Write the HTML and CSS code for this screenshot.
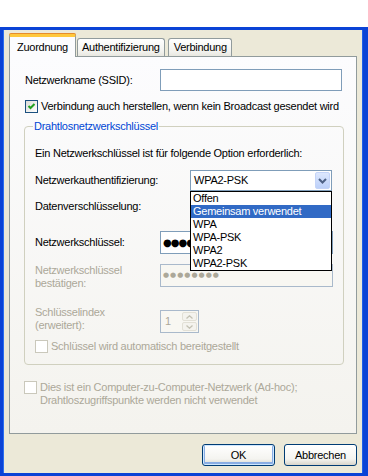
FILE: index.html
```html
<!DOCTYPE html>
<html lang="de">
<head>
  <meta charset="UTF-8" />
  <title>Drahtlosnetzwerkeigenschaften</title>
  <link rel="stylesheet" href="styles.css">
</head>
<body>

  <div class="window">
    <div class="tabs">
      <div class="tab active">Zuordnung</div>
      <div class="tab">Authentifizierung</div>
      <div class="tab">Verbindung</div>
    </div>

    <div class="pane">
      <div class="row ssid-row">
        <span class="lbl">Netzwerkname (SSID):</span>
        <div class="field ssid"></div>
      </div>

      <div class="check-row broadcast">
        <span class="cb checked">
          <svg width="11" height="11" viewBox="0 0 11 11"><polyline points="2.5,5 4.5,7 8.5,3" fill="none" stroke="#21a121" stroke-width="2"/></svg>
        </span>
        <span>Verbindung auch herstellen, wenn kein Broadcast gesendet wird</span>
      </div>

      <fieldset class="group">
        <legend>Drahtlosnetzwerkschlüssel</legend>

        <p class="intro">Ein Netzwerkschlüssel ist für folgende Option erforderlich:</p>

        <div class="row auth-row">
          <span class="lbl lbl-auth">Netzwerkauthentifizierung:</span>
          <div class="combo">
            <span class="combo-text">WPA2-PSK</span>
            <span class="combo-btn">
              <svg width="9" height="6" viewBox="0 0 9 6"><polyline points="1,1 4.5,4.5 8,1" fill="none" stroke="#4d6185" stroke-width="2"/></svg>
            </span>
            <ul class="dropdown">
              <li>Offen</li>
              <li class="selected">Gemeinsam verwendet</li>
              <li>WPA</li>
              <li>WPA-PSK</li>
              <li>WPA2</li>
              <li>WPA2-PSK</li>
            </ul>
          </div>
        </div>

        <div class="row data-row">
          <span class="lbl">Datenverschlüsselung:</span>
        </div>

        <div class="row key-row">
          <span class="lbl">Netzwerkschlüssel:</span>
          <div class="field key"><span class="dots">●●●●●●●●</span></div>
        </div>

        <div class="row confirm-row">
          <span class="lbl disabled">Netzwerkschlüssel<br>bestätigen:</span>
          <div class="field key off"><span class="dots small">●●●●●●●●</span></div>
        </div>

        <div class="row index-row">
          <span class="lbl disabled">Schlüsselindex<br>(erweitert):</span>
          <div class="spin">
            <span class="spin-val">1</span>
            <span class="spin-btns">
              <span class="spin-b"><svg width="7" height="4" viewBox="0 0 7 4"><polyline points="0.5,3.5 3.5,0.8 6.5,3.5" fill="none" stroke="#c3c1b3" stroke-width="1.3"/></svg></span>
              <span class="spin-b"><svg width="7" height="4" viewBox="0 0 7 4"><polyline points="0.5,0.5 3.5,3.2 6.5,0.5" fill="none" stroke="#c3c1b3" stroke-width="1.3"/></svg></span>
            </span>
          </div>
        </div>

        <div class="check-row auto">
          <span class="cb off"></span>
          <span class="disabled">Schlüssel wird automatisch bereitgestellt</span>
        </div>
      </fieldset>

      <div class="check-row adhoc">
        <span class="cb off"></span>
        <span class="disabled">Dies ist ein Computer-zu-Computer-Netzwerk (Ad-hoc);<br>Drahtloszugriffspunkte werden nicht verwendet</span>
      </div>
    </div>

    <div class="buttons">
      <button class="btn default">OK</button>
      <button class="btn">Abbrechen</button>
    </div>
  </div>

</body>
</html>
```

FILE: styles.css
```css
body {
  margin: 0;
  background: #fff;
  font-family: Tahoma, "Liberation Sans", Arial, sans-serif;
  font-size: 11px;
  line-height: 13px;
  letter-spacing: -0.25px;
  color: #000;
}

.window {
  margin-top: 27px;
  height: 449px;
  box-sizing: border-box;
  border-style: solid;
  border-color: #0b43d6;
  border-width: 3px 5px 3px 3px;
  box-shadow: inset 1px 0 0 #2b6ef0, inset -1px 0 0 #1f5ee8;
  background: #ece9d8;
  padding: 0 6px 0 6px;
}

/* tabs */
.tabs {
  display: flex;
  align-items: flex-end;
  gap: 1px;
  padding-top: 4px;
  margin-bottom: -1px;
  position: relative;
  z-index: 1;
}

.tab {
  height: 18px;
  box-sizing: border-box;
  padding: 2px 4px 0 4px;
  border: 1px solid #919b9c;
  border-bottom: none;
  border-radius: 3px 3px 0 0;
  background: linear-gradient(#ffffff, #f3f3ef 70%, #e8e7e0);
  margin-bottom: 1px;
}

.tab + .tab + .tab {
  margin-left: 2px;
  padding: 2px 4px 0 5px;
}

.tab.active {
  height: 23px;
  padding: 4px 7px 0 7px;
  margin-bottom: 0;
  background: #fcfcfe;
  border-top: 3px solid #ffc83c;
  box-shadow: 0 -1px 0 #e68b2c;
  border-radius: 2px 2px 0 0;
}

/* pane */
.pane {
  height: 378px;
  box-sizing: border-box;
  border: 1px solid #919b9c;
  background: linear-gradient(#fcfcfe, #f4f3ee);
  padding: 0 13px 0 15px;
}

.row {
  display: flex;
  align-items: center;
}

.lbl {
  width: 135px;
  flex-shrink: 0;
}

.group .lbl {
  width: 125px;
}

.field {
  box-sizing: border-box;
  border: 1px solid #7f9db9;
  background: #fff;
  height: 23px;
}

.ssid-row {
  margin-top: 12px;
  height: 22px;
}

.field.ssid {
  width: 182px;
  height: 22px;
}

.check-row {
  display: flex;
  align-items: flex-start;
  gap: 3px;
}

.broadcast {
  margin-top: 9px;
}

.cb {
  width: 13px;
  height: 13px;
  box-sizing: border-box;
  border: 1px solid #1c5180;
  background: linear-gradient(135deg, #dcdcd7, #fff);
  display: flex;
  flex-shrink: 0;
}

.cb.off {
  border-color: #cac8bb;
  background: #fff;
}

.disabled {
  color: #aca899;
}

/* group box */
.group {
  margin: 7px 0 0 -1px;
  width: 320px;
  box-sizing: border-box;
  height: 245px;
  border: 1px solid #d0d0bf;
  border-radius: 4px;
  padding: 0 0 0 10px;
}

.group legend {
  color: #0046d5;
  padding: 0 1px;
  margin-left: -2px;
}

.intro {
  margin: 14px 0 0 0;
}

.auth-row {
  margin-top: 10px;
  height: 21px;
}

.group .lbl-auth {
  width: 155px;
}

.combo {
  position: relative;
  width: 142px;
  height: 21px;
  box-sizing: border-box;
  border: 1px solid #7f9db9;
  background: #fff;
  display: flex;
  align-items: center;
  justify-content: space-between;
  padding: 0 1px 0 3px;
}

.combo-btn {
  width: 15px;
  height: 17px;
  box-sizing: border-box;
  border: 1px solid #c4d4f8;
  border-radius: 2px;
  background: linear-gradient(#dde8fe, #bcd0f9);
  display: flex;
  align-items: center;
  justify-content: center;
}

.dropdown {
  position: absolute;
  left: -1px;
  top: 20px;
  width: 142px;
  box-sizing: border-box;
  margin: 0;
  padding: 0;
  list-style: none;
  border: 1px solid #000;
  background: #fff;
  z-index: 2;
}

.dropdown li {
  height: 13px;
  padding-left: 2px;
}

.dropdown li.selected {
  background: #316ac5;
  color: #fff;
}

.data-row {
  margin-top: 5px;
  height: 21px;
}

.key-row {
  margin-top: 14px;
  height: 23px;
}

.lbl + .field.key {
  width: 173px;
  display: flex;
  align-items: center;
  padding-left: 2px;
  overflow: hidden;
}

.dots {
  font-family: "DejaVu Sans", sans-serif;
  font-size: 10px;
  letter-spacing: -1px;
}

.dots.small {
  font-size: 7px;
  letter-spacing: 1px;
  color: #aca899;
}

.field.off {
  border-color: #a9b9cb;
  background: #f8f7f2;
}

.confirm-row {
  margin-top: 10px;
  height: 23px;
  align-items: flex-start;
}

.index-row {
  margin-top: 19px;
  align-items: flex-start;
}

.spin {
  margin-top: 4px;
  width: 39px;
  height: 23px;
  box-sizing: border-box;
  border: 1px solid #a9b9cb;
  background: #f8f7f2;
  display: flex;
  justify-content: space-between;
  padding: 1px 1px 1px 4px;
  color: #aca899;
  align-items: center;
}

.spin-btns {
  display: flex;
  flex-direction: column;
  gap: 1px;
  align-self: stretch;
}

.spin-b {
  width: 15px;
  flex: 1;
  box-sizing: border-box;
  border: 1px solid #e2e0d6;
  border-radius: 2px;
  background: #f4f3ee;
  display: flex;
  align-items: center;
  justify-content: center;
}

.auto {
  margin-top: 7px;
}

.adhoc {
  margin-top: 16px;
  margin-left: -1px;
}

/* buttons */
.buttons {
  display: flex;
  justify-content: flex-end;
  gap: 9px;
  margin-top: 10px;
}

.btn {
  width: 73px;
  height: 22px;
  font: inherit;
  letter-spacing: inherit;
  color: #000;
  border: 1px solid #003c74;
  border-radius: 3px;
  background: linear-gradient(#ffffff, #f4f4f0 70%, #d8d5cb);
  padding: 0;
}

.btn.default {
  box-shadow: inset 0 0 0 1px #cee7ff, inset 0 -1px 0 2px #89ade4;
}
```
